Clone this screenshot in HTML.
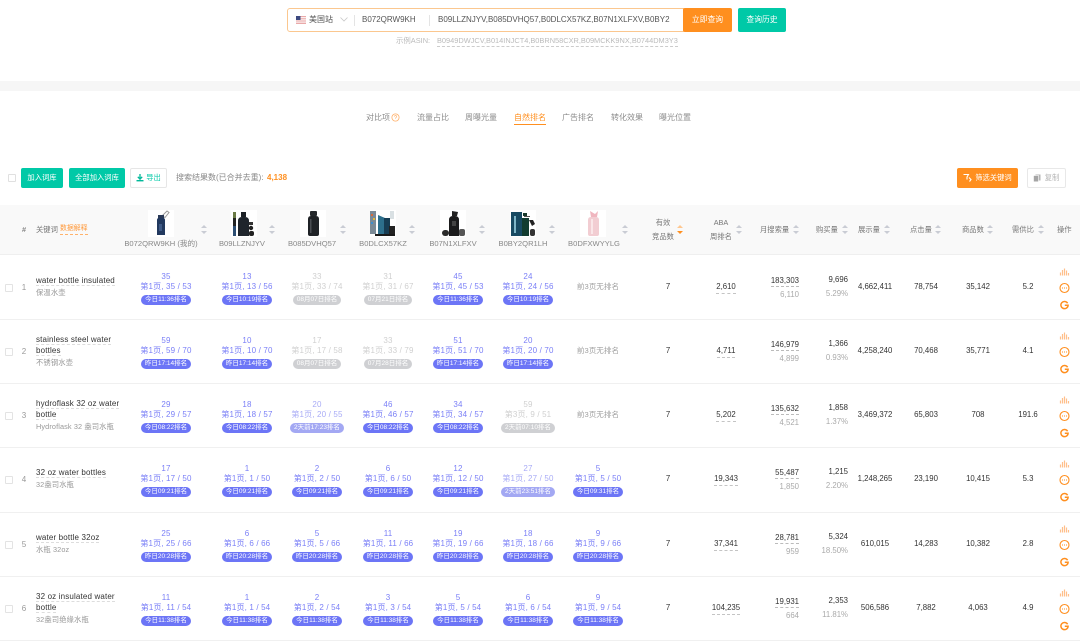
<!DOCTYPE html>
<html lang="zh"><head><meta charset="utf-8"><title>自然排名</title>
<style>
*{box-sizing:border-box;margin:0;padding:0}
html,body{width:1080px;height:644px;overflow:hidden;background:#fff}
body{position:relative;font:8px/1.2 "Liberation Sans","Noto Sans CJK SC",sans-serif;color:#333;filter:blur(.25px)}
.a{position:absolute;white-space:nowrap}
.btn{position:absolute;border-radius:2px;text-align:center;white-space:nowrap;color:#fff;font-size:7.3px}
.tab{position:absolute;top:112px;color:#8c8c8c;line-height:11px;white-space:nowrap;font-size:8px}
.cb{position:absolute;width:8px;height:8px;border:1px solid #e0e0e0;border-radius:1px;background:#fff}
.h{position:absolute;color:#777;line-height:13.5px;text-align:center;white-space:nowrap;font-size:7.3px}
.s{position:absolute;top:225px;width:6px;height:9px}
.s:before,.s:after{content:"";position:absolute;left:0;border-left:3px solid transparent;border-right:3px solid transparent}
.s:before{top:0;border-bottom:3.5px solid #c9ccd4}
.s:after{bottom:0;border-top:3.5px solid #c9ccd4}
.s.o:after{border-top-color:#ff8f1f}
.s.o:before{border-bottom-color:#ffc78f}
.pic{position:absolute;top:210px;width:26px;height:27px;background:#fff}
.pic svg{display:block;width:26px;height:27px}
.as{position:absolute;top:239px;color:#888;font-size:7.6px;text-align:center;width:80px;white-space:nowrap}
.r{position:absolute;left:0;width:1080px;height:64px;border-bottom:1px solid #f0f0f0}
.r>div{position:absolute;white-space:nowrap}
.cbx{left:5px;top:28px;width:8px;height:8px;border:1px solid #e3e3e3;border-radius:1px}
.n{left:20px;width:8px;top:27px;text-align:center;color:#999}
.kw{left:36px;width:86px;white-space:normal!important;top:0;height:62px;display:flex;flex-direction:column;justify-content:center}
.kw span{display:block;color:#333;line-height:11px;letter-spacing:.15px}
.kw span em{font-style:normal;border-bottom:1px dashed #ddd}
.kw small{display:block;color:#999;font-size:7.3px;line-height:12px;margin-top:1px;white-space:nowrap;letter-spacing:.12px}
.k{width:70px;top:16px;text-align:center;color:#7b80f7;line-height:10.2px;letter-spacing:.15px}
.k b{display:block;font-weight:400}
.k i{display:block;font-style:normal}
.k u{display:table;text-decoration:none;padding:0 4px;height:10px;margin:2.5px auto 0;border-radius:5px;background:#6c75f6;color:#fff;font-size:6.5px;line-height:10px;letter-spacing:0;white-space:nowrap}
.k.g{color:#d0d0d0}.k.g u{background:#cfd0d3}
.k.l{color:#a9acf6}.k.l u{background:#a3a8f3}
.k.x{color:#a0a0a0;top:26px;font-size:7.6px;letter-spacing:0}
.c1{left:131px}.c2{left:212px}.c3{left:282px}.c4{left:353px}.c5{left:423px}.c6{left:493px}.c7{left:563px}
.v{top:26px;text-align:center;color:#333;width:60px;font-size:7.8px}
.e{left:638px}
.ab{left:696px}.ab span{border-bottom:1px dashed #c4c4c4;padding-bottom:2px}
.ms{right:281px;top:20px;text-align:right;line-height:13px;font-size:7.8px}
.ms span{display:block;border-bottom:1px dashed #bbb;color:#333;line-height:10px;padding-bottom:0}
.ms small{display:block;font-size:7.8px;color:#aaa;margin-top:3px;line-height:10px}
.bu{right:232px;top:18px;text-align:right;font-size:7.8px}
.bu span{display:block;line-height:12px}
.bu small{display:block;font-size:7.8px;color:#aaa;margin-top:3px;line-height:10px}
.i1{left:845px}.i2{left:896px}.i3{left:948px}.i4{left:998px}
.ic{left:1058px;top:11px;width:13px;height:44px}
.ic svg{display:block;width:13px;height:44px}
</style></head><body>

<svg width="0" height="0" style="position:absolute"><symbol id="ops" viewBox="0 0 13 44"><path d="M2.500 8.500V5.500M4.500 8.500V3M6.500 8.500V1.500M8.500 8.500V3.500M10.500 8.500V6" stroke="#ffbf8a" stroke-width="1.200" fill="none"/><circle cx="6.500" cy="21" r="4.500" fill="none" stroke="#ff8f1f" stroke-width="1.100"/><path d="M4 21h1M6 21h1M8 21h1" stroke="#ff8f1f" stroke-width="1"/><path d="M9.600 36.200A3.600 3.600 0 1 0 10.100 38.300H6.800" fill="none" stroke="#ff8f1f" stroke-width="1.500"/></symbol></svg>

<div class="a" style="left:287px;top:8px;width:397px;height:24px;border:1px solid #fbc78f;border-radius:3px 0 0 3px;background:#fff"></div>
<svg class="a" style="left:296px;top:16px" width="10" height="8" viewBox="0 0 10 8"><rect width="10" height="8" fill="#e9a9a9"/><rect y="1.2" width="10" height="1" fill="#fff"/><rect y="3.4" width="10" height="1" fill="#fff"/><rect y="5.6" width="10" height="1" fill="#fff"/><rect width="4.5" height="4" fill="#3d4a80"/></svg>
<div class="a" style="left:309px;top:15px;color:#555">美国站</div>
<svg class="a" style="left:340px;top:17px" width="8" height="5" viewBox="0 0 8 5"><path d="M.5.5L4 4 7.500.5" fill="none" stroke="#c8c8c8" stroke-width=".8"/></svg>
<div class="a" style="left:354px;top:15px;width:1px;height:11px;background:#e4e4e4"></div>
<div class="a" style="left:362px;top:15px;color:#555">B072QRW9KH</div>
<div class="a" style="left:429px;top:15px;width:1px;height:11px;background:#e4e4e4"></div>
<div class="a" style="left:438px;top:15px;color:#555">B09LLZNJYV,B085DVHQ57,B0DLCX57KZ,B07N1XLFXV,B0BY2</div>
<div class="btn" style="left:683px;top:8px;width:49px;height:24px;line-height:24px;background:#ff8f1f;font-size:7.800px">立即查询</div>
<div class="btn" style="left:738px;top:8px;width:48px;height:24px;line-height:24px;background:#00c9a7;font-size:7.800px">查询历史</div>
<div class="a" style="left:396px;top:37px;color:#bbb;font-size:7.4px">示例ASIN:</div>
<div class="a" style="left:437px;top:37px;color:#bbb;font-size:7.4px;border-bottom:1px dashed #ccc">B0949DWJCV,B014INJCT4,B0BRN58CXR,B09MCKK9NX,B0744DM3Y3</div>

<div class="a" style="left:0;top:81px;width:1080px;height:10px;background:#f6f6f6"></div>

<div class="tab" style="left:366px">对比项</div>
<svg class="a" style="left:391px;top:113px" width="9" height="9" viewBox="0 0 9 9"><circle cx="4.500" cy="4.500" r="3.600" fill="none" stroke="#ffb06a" stroke-width=".8"/><path d="M3.400 3.600a1.100 1.100 0 1 1 1.600 1l-.5.500v.5" fill="none" stroke="#ffb06a" stroke-width=".7"/></svg>
<div class="tab" style="left:417px">流量占比</div>
<div class="tab" style="left:465px">周曝光量</div>
<div class="tab" style="left:514px;color:#ff8f1f;height:13px;border-bottom:1px solid #ff8f1f">自然排名</div>
<div class="tab" style="left:562px">广告排名</div>
<div class="tab" style="left:611px">转化效果</div>
<div class="tab" style="left:659px">曝光位置</div>

<div class="cb" style="left:8px;top:174px"></div>
<div class="btn" style="left:21px;top:168px;width:42px;height:20px;line-height:20px;background:#00c9a7">加入词库</div>
<div class="btn" style="left:69px;top:168px;width:56px;height:20px;line-height:20px;background:#00c9a7">全部加入词库</div>
<div class="btn" style="left:130px;top:168px;width:37px;height:20px;line-height:18px;border:1px solid #e6e6e6;color:#00c9a7;padding-left:10px">导出</div>
<svg class="a" style="left:136px;top:174px" width="8" height="8" viewBox="0 0 8 8"><path d="M4 0v4M1.800 2.800L4 5.200 6.200 2.800" fill="none" stroke="#00b899" stroke-width="1.300"/><rect x="0.500" y="6" width="7" height="1.400" fill="#00b899"/></svg>
<div class="a" style="left:176px;top:173px;color:#888">搜索结果数(已合并去重):</div>
<div class="a" style="left:267px;top:173px;color:#ff8f1f;font-weight:700">4,138</div>

<div class="btn" style="left:957px;top:168px;width:61px;height:20px;line-height:20px;background:#ff8f1f;padding-left:12px">筛选关键词</div>
<svg class="a" style="left:963px;top:174px" width="9" height="8" viewBox="0 0 9 8"><path d="M.5.500h5L4 3v2.500M6 3.500l2 2-1.500 2" fill="none" stroke="#fff" stroke-width="1.100"/></svg>
<div class="btn" style="left:1027px;top:168px;width:39px;height:20px;line-height:18px;border:1px solid #e8e8e8;color:#b5b5b5;padding-left:11px">复制</div>
<svg class="a" style="left:1033px;top:174px" width="8" height="8" viewBox="0 0 8 8"><rect x="2.500" y=".5" width="5" height="6" fill="#b5b5b5"/><rect x=".5" y="1.500" width="5" height="6.300" fill="#a5a5a5" stroke="#fff" stroke-width=".6"/></svg>

<div class="a" style="left:0;top:205px;width:1080px;height:50px;background:#f9f9f9;border-bottom:1px solid #efefef"></div>
<div class="h" style="left:20px;top:223px;width:8px;font-weight:700;color:#888">#</div>
<div class="h" style="left:36px;top:223px">关键词</div>
<div class="h" style="left:60px;top:223px;color:#ff9a3d;line-height:11px;font-size:6.900px;border-bottom:1px dashed #ffb26b">数据解释</div>

<div class="pic" style="left:148px"><svg viewBox="0 0 26 27"><path d="M14 6l5-5 2 1.500-4 5z" fill="none" stroke="#9a9a9a"/><rect x="10" y="5" width="6" height="4" fill="#2a3a58"/><path d="M9 10q0-2 2-2h4q2 0 2 2v15H9z" fill="#22395f"/><rect x="11" y="14" width="3" height="7" fill="#3f5a86"/></svg></div>
<div class="pic" style="left:231px"><svg viewBox="0 0 26 27"><rect x="2" y="2" width="3" height="6" fill="#6a7a45"/><rect x="2" y="8" width="3" height="8" fill="#222"/><rect x="2" y="16" width="3" height="10" fill="#2d4f74"/><rect x="10" y="2" width="5" height="5" fill="#1c2126"/><path d="M7 11q0-4 4-4h3q4 0 4 4v15H7z" fill="#1e242b"/><path d="M18 12h4v3h-4z" fill="#333"/><circle cx="20" cy="18" r="2.200" fill="#222"/><rect x="18" y="21" width="5" height="5" rx="2" fill="#222"/></svg></div>
<div class="pic" style="left:300px"><svg viewBox="0 0 26 27"><rect x="10" y="1" width="7" height="5" rx="1" fill="#25282c"/><path d="M8 9q0-3 3-3h5q3 0 3 3v15q0 2-2 2h-7q-2 0-2-2z" fill="#1f2226"/><rect x="10" y="9" width="1.500" height="14" fill="#4a4d52"/></svg></div>
<div class="pic" style="left:370px"><svg viewBox="0 0 26 27"><rect x="0" y="1" width="6" height="23" fill="#7b8a96"/><rect x="1" y="4" width="2" height="2" fill="#d96b3a"/><rect x="3" y="8" width="2" height="2" fill="#e0b83c"/><rect x="1" y="12" width="2" height="2" fill="#3c8fd0"/><path d="M8 5l7 3v17H8z" fill="#2d6f8c"/><rect x="14" y="8" width="6" height="16" fill="#173d54"/><rect x="20" y="1" width="4" height="8" fill="#d9e0e3"/><rect x="19" y="16" width="6" height="9" fill="#222"/><rect x="5" y="24" width="20" height="2" fill="#1a1a1a"/></svg></div>
<div class="pic" style="left:440px"><svg viewBox="0 0 26 27"><path d="M12 1l6 1-1 4h-5z" fill="#222"/><path d="M9 10q0-4 4-4h2q4 0 4 4v16H9z" fill="#1b1b1c"/><rect x="12" y="11" width="4" height="5" fill="#444"/><rect x="2" y="20" width="7" height="6" rx="3" fill="#2b2b2b"/><rect x="19" y="19" width="6" height="7" rx="2" fill="#555"/></svg></div>
<div class="pic" style="left:510px"><svg viewBox="0 0 26 27"><rect x="1" y="2" width="11" height="24" fill="#184a62"/><rect x="4" y="6" width="2" height="17" fill="#7fb6c8"/><rect x="13" y="3" width="4" height="3" fill="#1a3a2c"/><path d="M12 8h7v18h-7z" fill="#123c30"/><path d="M19 10h4l2 4-3 2z" fill="#222"/><rect x="20" y="19" width="5" height="7" rx="2" fill="#333"/><rect x="14" y="6" width="6" height="1" fill="#555"/></svg></div>
<div class="pic" style="left:580px"><svg viewBox="0 0 26 27"><path d="M10 1l5 3 3-3-1 6h-6z" fill="#f0b6bf"/><path d="M8 10q0-3 3-3h5q3 0 3 3v14q0 2-2 2h-7q-2 0-2-2z" fill="#f2cdd2"/><rect x="11" y="9" width="2" height="15" fill="#fae6e8"/></svg></div>

<div class="as" style="left:121px">B072QRW9KH (我的)</div><div class="s" style="left:201px"></div>
<div class="as" style="left:202px">B09LLZNJYV</div><div class="s" style="left:269px"></div>
<div class="as" style="left:272px">B085DVHQ57</div><div class="s" style="left:340px"></div>
<div class="as" style="left:343px">B0DLCX57KZ</div><div class="s" style="left:409px"></div>
<div class="as" style="left:413px">B07N1XLFXV</div><div class="s" style="left:479px"></div>
<div class="as" style="left:483px">B0BY2QR1LH</div><div class="s" style="left:549px"></div>
<div class="as" style="left:554px">B0DFXWYYLG</div><div class="s" style="left:622px"></div>
<div class="h" style="left:643px;top:216px;width:40px">有效<br>竞品数</div><div class="s o" style="left:677px"></div>
<div class="h" style="left:701px;top:216px;width:40px">ABA<br>周排名</div><div class="s" style="left:736px"></div>
<div class="h" style="left:760px;top:223px">月搜索量</div><div class="s" style="left:793px"></div>
<div class="h" style="left:816px;top:223px">购买量</div><div class="s" style="left:842px"></div>
<div class="h" style="left:858px;top:223px">展示量</div><div class="s" style="left:884px"></div>
<div class="h" style="left:910px;top:223px">点击量</div><div class="s" style="left:935px"></div>
<div class="h" style="left:962px;top:223px">商品数</div><div class="s" style="left:987px"></div>
<div class="h" style="left:1012px;top:223px">需供比</div><div class="s" style="left:1038px"></div>
<div class="h" style="left:1057px;top:223px">操作</div>

<div class="r" style="top:256px">
<div class="cbx"></div><div class="n">1</div>
<div class="kw"><span><em>water bottle insulated</em></span><small>保温水壶</small></div>
<div class="k c1"><b>35</b><i>第1页, 35 / 53</i><u>今日11:36排名</u></div>
<div class="k c2"><b>13</b><i>第1页, 13 / 56</i><u>今日10:19排名</u></div>
<div class="k c3 g"><b>33</b><i>第1页, 33 / 74</i><u>08月07日排名</u></div>
<div class="k c4 g"><b>31</b><i>第1页, 31 / 67</i><u>07月21日排名</u></div>
<div class="k c5"><b>45</b><i>第1页, 45 / 53</i><u>今日11:36排名</u></div>
<div class="k c6"><b>24</b><i>第1页, 24 / 56</i><u>今日10:19排名</u></div>
<div class="k c7 x">前3页无排名</div>
<div class="v e">7</div><div class="v ab"><span>2,610</span></div>
<div class="ms"><span>183,303</span><small>6,110</small></div>
<div class="bu"><span>9,696</span><small>5.29%</small></div>
<div class="v i1">4,662,411</div><div class="v i2">78,754</div><div class="v i3">35,142</div><div class="v i4">5.2</div>
<div class="ic"><svg viewBox="0 0 13 44"><use href="#ops"/></svg></div>
</div>

<div class="r" style="top:320px">
<div class="cbx"></div><div class="n">2</div>
<div class="kw"><span><em>stainless steel water</em> <em>bottles</em></span><small>不锈钢水壶</small></div>
<div class="k c1"><b>59</b><i>第1页, 59 / 70</i><u>昨日17:14排名</u></div>
<div class="k c2"><b>10</b><i>第1页, 10 / 70</i><u>昨日17:14排名</u></div>
<div class="k c3 g"><b>17</b><i>第1页, 17 / 58</i><u>08月07日排名</u></div>
<div class="k c4 g"><b>33</b><i>第1页, 33 / 79</i><u>07月28日排名</u></div>
<div class="k c5"><b>51</b><i>第1页, 51 / 70</i><u>昨日17:14排名</u></div>
<div class="k c6"><b>20</b><i>第1页, 20 / 70</i><u>昨日17:14排名</u></div>
<div class="k c7 x">前3页无排名</div>
<div class="v e">7</div><div class="v ab"><span>4,711</span></div>
<div class="ms"><span>146,979</span><small>4,899</small></div>
<div class="bu"><span>1,366</span><small>0.93%</small></div>
<div class="v i1">4,258,240</div><div class="v i2">70,468</div><div class="v i3">35,771</div><div class="v i4">4.1</div>
<div class="ic"><svg viewBox="0 0 13 44"><use href="#ops"/></svg></div>
</div>

<div class="r" style="top:384px">
<div class="cbx"></div><div class="n">3</div>
<div class="kw"><span><em>hydroflask 32 oz water</em> <em>bottle</em></span><small>Hydroflask 32 盎司水瓶</small></div>
<div class="k c1"><b>29</b><i>第1页, 29 / 57</i><u>今日08:22排名</u></div>
<div class="k c2"><b>18</b><i>第1页, 18 / 57</i><u>今日08:22排名</u></div>
<div class="k c3 l"><b>20</b><i>第1页, 20 / 55</i><u>2天前17:23排名</u></div>
<div class="k c4"><b>46</b><i>第1页, 46 / 57</i><u>今日08:22排名</u></div>
<div class="k c5"><b>34</b><i>第1页, 34 / 57</i><u>今日08:22排名</u></div>
<div class="k c6 g"><b>59</b><i>第3页, 9 / 51</i><u>2天前07:10排名</u></div>
<div class="k c7 x">前3页无排名</div>
<div class="v e">7</div><div class="v ab"><span>5,202</span></div>
<div class="ms"><span>135,632</span><small>4,521</small></div>
<div class="bu"><span>1,858</span><small>1.37%</small></div>
<div class="v i1">3,469,372</div><div class="v i2">65,803</div><div class="v i3">708</div><div class="v i4">191.6</div>
<div class="ic"><svg viewBox="0 0 13 44"><use href="#ops"/></svg></div>
</div>

<div class="r" style="top:448px;height:65px">
<div class="cbx"></div><div class="n">4</div>
<div class="kw"><span><em>32 oz water bottles</em></span><small>32盎司水瓶</small></div>
<div class="k c1"><b>17</b><i>第1页, 17 / 50</i><u>今日09:21排名</u></div>
<div class="k c2"><b>1</b><i>第1页, 1 / 50</i><u>今日09:21排名</u></div>
<div class="k c3"><b>2</b><i>第1页, 2 / 50</i><u>今日09:21排名</u></div>
<div class="k c4"><b>6</b><i>第1页, 6 / 50</i><u>今日09:21排名</u></div>
<div class="k c5"><b>12</b><i>第1页, 12 / 50</i><u>今日09:21排名</u></div>
<div class="k c6 l"><b>27</b><i>第1页, 27 / 50</i><u>2天前23:51排名</u></div>
<div class="k c7"><b>5</b><i>第1页, 5 / 50</i><u>今日09:31排名</u></div>
<div class="v e">7</div><div class="v ab"><span>19,343</span></div>
<div class="ms"><span>55,487</span><small>1,850</small></div>
<div class="bu"><span>1,215</span><small>2.20%</small></div>
<div class="v i1">1,248,265</div><div class="v i2">23,190</div><div class="v i3">10,415</div><div class="v i4">5.3</div>
<div class="ic"><svg viewBox="0 0 13 44"><use href="#ops"/></svg></div>
</div>

<div class="r" style="top:513px">
<div class="cbx"></div><div class="n">5</div>
<div class="kw"><span><em>water bottle 32oz</em></span><small>水瓶 32oz</small></div>
<div class="k c1"><b>25</b><i>第1页, 25 / 66</i><u>昨日20:28排名</u></div>
<div class="k c2"><b>6</b><i>第1页, 6 / 66</i><u>昨日20:28排名</u></div>
<div class="k c3"><b>5</b><i>第1页, 5 / 66</i><u>昨日20:28排名</u></div>
<div class="k c4"><b>11</b><i>第1页, 11 / 66</i><u>昨日20:28排名</u></div>
<div class="k c5"><b>19</b><i>第1页, 19 / 66</i><u>昨日20:28排名</u></div>
<div class="k c6"><b>18</b><i>第1页, 18 / 66</i><u>昨日20:28排名</u></div>
<div class="k c7"><b>9</b><i>第1页, 9 / 66</i><u>昨日20:28排名</u></div>
<div class="v e">7</div><div class="v ab"><span>37,341</span></div>
<div class="ms"><span>28,781</span><small>959</small></div>
<div class="bu"><span>5,324</span><small>18.50%</small></div>
<div class="v i1">610,015</div><div class="v i2">14,283</div><div class="v i3">10,382</div><div class="v i4">2.8</div>
<div class="ic"><svg viewBox="0 0 13 44"><use href="#ops"/></svg></div>
</div>

<div class="r" style="top:577px">
<div class="cbx"></div><div class="n">6</div>
<div class="kw"><span><em>32 oz insulated water</em> <em>bottle</em></span><small>32盎司绝缘水瓶</small></div>
<div class="k c1"><b>11</b><i>第1页, 11 / 54</i><u>今日11:38排名</u></div>
<div class="k c2"><b>1</b><i>第1页, 1 / 54</i><u>今日11:38排名</u></div>
<div class="k c3"><b>2</b><i>第1页, 2 / 54</i><u>今日11:38排名</u></div>
<div class="k c4"><b>3</b><i>第1页, 3 / 54</i><u>今日11:38排名</u></div>
<div class="k c5"><b>5</b><i>第1页, 5 / 54</i><u>今日11:38排名</u></div>
<div class="k c6"><b>6</b><i>第1页, 6 / 54</i><u>今日11:38排名</u></div>
<div class="k c7"><b>9</b><i>第1页, 9 / 54</i><u>今日11:38排名</u></div>
<div class="v e">7</div><div class="v ab"><span>104,235</span></div>
<div class="ms"><span>19,931</span><small>664</small></div>
<div class="bu"><span>2,353</span><small>11.81%</small></div>
<div class="v i1">506,586</div><div class="v i2">7,882</div><div class="v i3">4,063</div><div class="v i4">4.9</div>
<div class="ic"><svg viewBox="0 0 13 44"><use href="#ops"/></svg></div>
</div>

</body></html>
